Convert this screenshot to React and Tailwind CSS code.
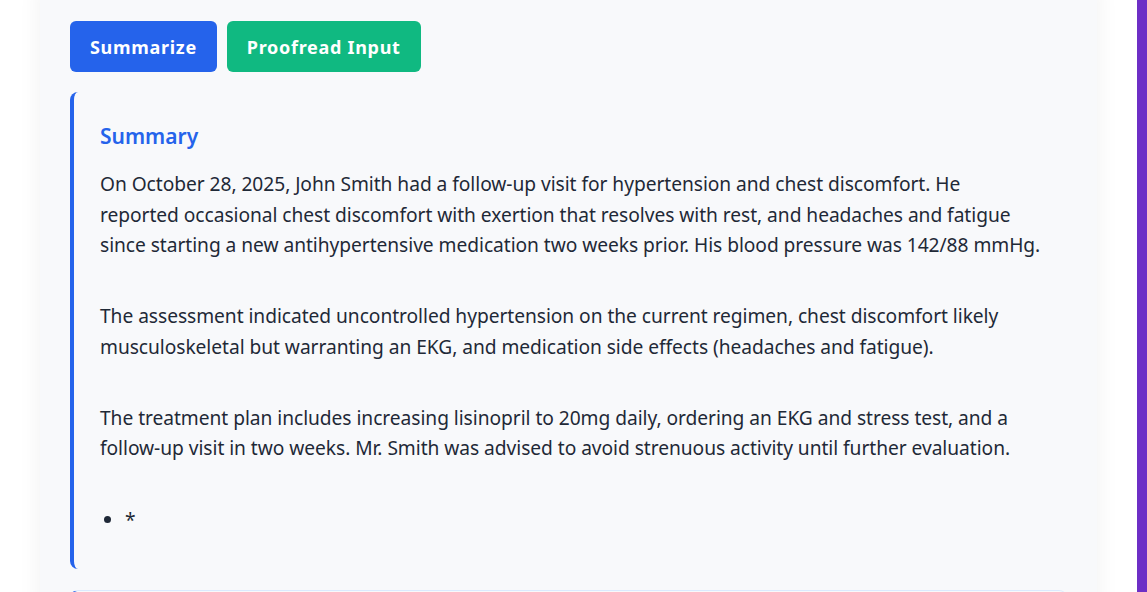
import React from 'react'

const paragraphs = [
  'On October 28, 2025, John Smith had a follow-up visit for hypertension and chest discomfort. He reported occasional chest discomfort with exertion that resolves with rest, and headaches and fatigue since starting a new antihypertensive medication two weeks prior. His blood pressure was 142/88 mmHg.',
  'The assessment indicated uncontrolled hypertension on the current regimen, chest discomfort likely musculoskeletal but warranting an EKG, and medication side effects (headaches and fatigue).',
  'The treatment plan includes increasing lisinopril to 20mg daily, ordering an EKG and stress test, and a follow-up visit in two weeks. Mr. Smith was advised to avoid strenuous activity until further evaluation.',
]

const App = () => {
  return (
    <div className="flex h-[592px] w-full overflow-hidden bg-white font-['Noto_Sans',sans-serif] text-[#1f2937]">
      <div className="flex-1 px-10">
        <div className="-mt-6 h-[640px] rounded-xl bg-[#f8f9fb] px-[30px] pt-[45px] shadow-[0_4px_24px_rgba(0,0,0,0.06)]">
          <div className="flex gap-2.5">
            <button className="h-[51px] rounded-md bg-[#2563eb] px-5 text-lg font-bold tracking-[0.7px] text-white">Summarize</button>
            <button className="h-[51px] rounded-md bg-[#10b981] px-5 text-lg font-bold tracking-[0.7px] text-white">Proofread Input</button>
          </div>

          <div className="mt-5 rounded-lg border-l-4 border-[#2563eb] px-[26px] pt-[27px] pb-[33px]">
            <h3 className="text-[21px] font-semibold leading-[34px] text-[#2563eb]">Summary</h3>
            <div className="mt-[16px] text-[19.2px] leading-[30.7px] tracking-[-0.05px]">
              {paragraphs.map((p, i) => (
                <p key={i} className="mb-[40px]">{p}</p>
              ))}
              <ul className="list-disc pl-[25px]">
                <li className="pt-px">*</li>
              </ul>
            </div>
          </div>

          <div className="mt-[21px] h-10 rounded-lg border-t border-l-4 border-t-[#dbeafe] border-l-[#2563eb] bg-[#f8f9fb]" />
        </div>
      </div>
      <div className="w-2.5 bg-[#6d2fc6]" />
    </div>
  )
}

export default App
